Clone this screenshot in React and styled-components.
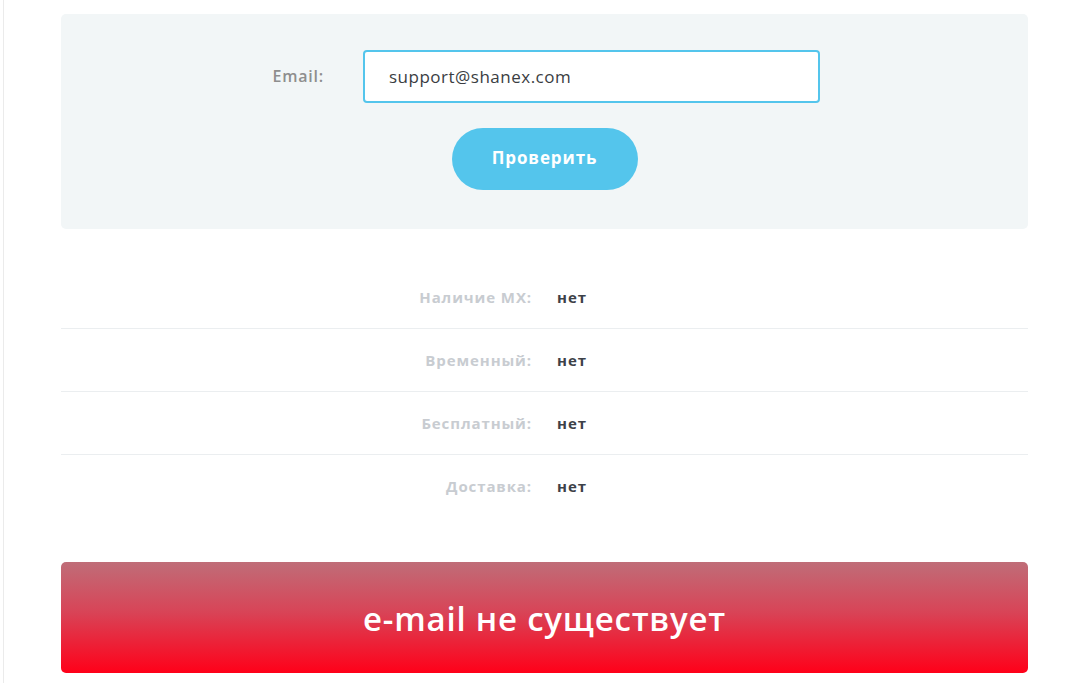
import React from 'react'
import styled, { createGlobalStyle } from 'styled-components'

const Global = createGlobalStyle`
    body {
        margin: 0;
        background: #ffffff;
        font-family: "Open Sans", "Liberation Sans", sans-serif;
    }
`

const Page = styled.div`
    margin-left: 3px;
    border-left: 1px solid #ebebeb;
    min-height: 683px;
    box-sizing: border-box;
    padding: 14px 0 10px 57px;
`

const Content = styled.div`
    width: 967px;
`

const Panel = styled.form`
    background: #f2f6f7;
    border-radius: 5px;
    padding: 36px 0 39px;
    display: flex;
    flex-direction: column;
    align-items: center;
    gap: 25px;
`

const FieldRow = styled.div`
    display: flex;
    align-items: center;
`

const Label = styled.label`
    width: 94px;
    box-sizing: border-box;
    padding-right: 39px;
    text-align: right;
    font-size: 16px;
    font-weight: 600;
    letter-spacing: 0.8px;
    color: #8e8e8e;
    margin-top: -2px;
`

const Input = styled.input`
    width: 457px;
    height: 53px;
    box-sizing: border-box;
    border: 2px solid #54c5ec;
    border-radius: 4px;
    padding: 0 0 0 24px;
    font-family: "Open Sans", "Liberation Sans", sans-serif;
    font-size: 17px;
    letter-spacing: 0.5px;
    color: #3a3d42;
    background: #ffffff;
    outline: none;
`

const Button = styled.button`
    width: 186px;
    height: 62px;
    border: none;
    border-radius: 31px;
    background: #54c5ec;
    color: #ffffff;
    font-family: "Open Sans", "Liberation Sans", sans-serif;
    font-size: 17px;
    font-weight: 700;
    letter-spacing: 0.9px;
    padding: 0 0 3px;
    cursor: pointer;
`

const Results = styled.div`
    margin-top: 36px;
`

const ResultRow = styled.div`
    display: grid;
    grid-template-columns: 1fr 1fr;
    column-gap: 25px;
    align-items: center;
    height: 63px;
    border-top: ${p => (p.first ? 'none' : '1px solid #ebeef0')};
    box-sizing: border-box;
`

const Key = styled.span`
    text-align: right;
    font-size: 15px;
    font-weight: 700;
    letter-spacing: 0.9px;
    color: #c8ccd1;
`

const Value = styled.span`
    font-size: 15px;
    font-weight: 700;
    letter-spacing: 1px;
    color: #3d4148;
`

const Banner = styled.div`
    margin-top: 45px;
    height: 111px;
    border-radius: 5px;
    background: linear-gradient(to bottom, #bf6d78 0%, #d84457 45%, #ff0019 100%);
    display: flex;
    align-items: center;
    justify-content: center;
    color: #ffffff;
    font-family: "Open Sans", "Liberation Sans", sans-serif;
    font-size: 33px;
    font-weight: 600;
    letter-spacing: 0.8px;
    padding-top: 2px;
    box-sizing: border-box;
`

const rows = [
    { key: 'Наличие MX:', value: 'нет' },
    { key: 'Временный:', value: 'нет' },
    { key: 'Бесплатный:', value: 'нет' },
    { key: 'Доставка:', value: 'нет' },
]

export default function App() {
    return (
        <React.Fragment>
            <Global />
            <Page>
                <Content>
                    <Panel onSubmit={e => e.preventDefault()}>
                        <FieldRow>
                            <Label htmlFor="email">Email:</Label>
                            <Input id="email" type="text" defaultValue="support@shanex.com" />
                        </FieldRow>
                        <Button type="submit">Проверить</Button>
                    </Panel>

                    <Results>
                        {rows.map((row, i) => (
                            <ResultRow key={row.key} first={i === 0}>
                                <Key>{row.key}</Key>
                                <Value>{row.value}</Value>
                            </ResultRow>
                        ))}
                    </Results>

                    <Banner>e-mail не существует</Banner>
                </Content>
            </Page>
        </React.Fragment>
    )
}
